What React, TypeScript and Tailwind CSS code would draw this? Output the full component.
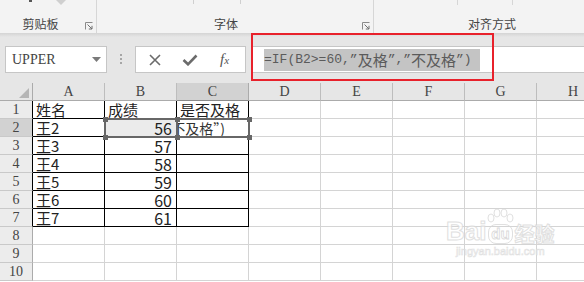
import React from 'react';

const serif = "font-['Liberation_Serif','Noto_Sans_CJK_SC',serif]";
const cjk = "font-['Noto_Sans_CJK_SC',sans-serif]";
const mono = "font-['Liberation_Mono','Noto_Sans_CJK_SC',monospace]";

const letters = ['A', 'B', 'C', 'D', 'E', 'F', 'G'];

// 表格内容 A1:C7
const data: string[][] = [
    ['姓名', '成绩', '是否及格'],
    ['王2', '56', ''],
    ['王3', '57', ''],
    ['王4', '58', ''],
    ['王5', '59', ''],
    ['王6', '60', ''],
    ['王7', '61', ''],
];

const Launcher = () => (
    <svg width="8" height="8" viewBox="0 0 8 8" className="shrink-0">
        <path d="M0.5 7.5V0.5H7.5" fill="none" stroke="#8a8a8a" />
        <path d="M2.5 2.5L7 7M7 3.8V7H3.8" fill="none" stroke="#6f6f6f" />
    </svg>
);

const Handle = ({ x, y }: { x: number; y: number }) => (
    <div className="absolute w-[5px] h-[5px] bg-[#676767]" style={{ left: x - 2, top: y - 2 }} />
);

const Cell: React.FC<{ row: number; col: number }> = ({ row, col }) => {
    const inTable = row <= 7 && col < 3;
    const border = inTable ? 'border-black' : 'border-[#d4d4d4]';
    const value = row <= 7 && col < 3 ? data[row - 1][col] : '';
    const isNumber = /^\d+$/.test(value);
    const selectedB = row === 2 && col === 1;
    const editingC = row === 2 && col === 2;
    return (
        <div
            className={`w-[72px] h-[18px] shrink-0 border-r border-b ${border} ${selectedB ? 'bg-[#ebebeb]' : 'bg-white'} flex items-center overflow-hidden whitespace-nowrap ${cjk} text-[#222] leading-none ${isNumber ? 'justify-end pr-[4px] text-[16px]' : 'pl-[3px] text-[15px]'}`}
        >
            {editingC ? (
                <div className="w-full flex justify-end pr-[23px] text-[14px] text-[#333]">不及格”)</div>
            ) : (
                value
            )}
        </div>
    );
};

const App: React.FC = () => {
    return (
        <div className="relative w-[584px] h-[282px] overflow-hidden bg-white">
            {/* 功能区 */}
            <div className="flex h-[33px] bg-[#f3f3f3]">
                <div className="w-[97px] shrink-0 border-r border-[#d6d6d6] flex flex-col">
                    <svg width="96" height="8" className="shrink-0">
                        <rect x="29" y="0" width="3" height="2" fill="#555" />
                        <path d="M56 0L61 5L66 0Z" fill="#cfcfcf" />
                    </svg>
                    <div className="flex items-end flex-1 pb-[1px]">
                        <div className={`w-[81px] text-center text-[12px] leading-[16px] text-[#444] ${cjk}`}>剪贴板</div>
                        <div className="ml-[4px] mb-[2px]">
                            <Launcher />
                        </div>
                    </div>
                </div>
                <div className="w-[277px] shrink-0 border-r border-[#d6d6d6] flex flex-col">
                    <svg width="276" height="8" className="shrink-0">
                        <rect x="96" y="0" width="1" height="4" fill="#cfcfcf" />
                        <rect x="143" y="0" width="1" height="4" fill="#cfcfcf" />
                    </svg>
                    <div className="flex items-end flex-1 pb-[1px]">
                        <div className={`w-[258px] text-center text-[12px] leading-[16px] text-[#444] ${cjk}`}>字体</div>
                        <div className="ml-[7px] mb-[2px]">
                            <Launcher />
                        </div>
                    </div>
                </div>
                <div className="flex-1 flex flex-col">
                    <svg width="210" height="8" className="shrink-0">
                        <rect x="83" y="0" width="1" height="5" fill="#d6d6d6" />
                        <rect x="138" y="0" width="1" height="5" fill="#d6d6d6" />
                    </svg>
                    <div className="flex items-end flex-1 pb-[1px]">
                        <div className={`ml-[94px] text-[12px] leading-[16px] text-[#444] ${cjk}`}>对齐方式</div>
                    </div>
                </div>
            </div>
            <div className="h-[4px] bg-gradient-to-b from-[#d4d4d4] to-[#e6e6e6]" />

            {/* 编辑栏 */}
            <div className="h-[46px] bg-[#e6e6e6] pt-[9px]">
                <div className="flex items-start h-[27px]">
                    <div className="ml-[5px] w-[102px] h-[27px] bg-white border border-[#c6c6c6] flex items-center pl-[6px] pr-[5px]">
                        <span className={`flex-1 text-[14px] text-[#444] ${serif}`}>UPPER</span>
                        <svg width="9" height="5" viewBox="0 0 9 5">
                            <path d="M0 0H9L4.5 5Z" fill="#7a7a7a" />
                        </svg>
                    </div>
                    <div className="ml-[13px] mt-[8px] flex flex-col gap-[2px]">
                        <div className="w-[2px] h-[2px] bg-[#a6a6a6]" />
                        <div className="w-[2px] h-[2px] bg-[#a6a6a6]" />
                        <div className="w-[2px] h-[2px] bg-[#a6a6a6]" />
                    </div>
                    <div className="ml-[13px] w-[111px] h-[27px] bg-white border border-[#c6c6c6] flex items-center">
                        <svg width="12" height="12" viewBox="0 0 12 12" className="ml-[13px]">
                            <path d="M1 1L11 11M11 1L1 11" stroke="#6b6b6b" strokeWidth="1.6" />
                        </svg>
                        <svg width="16" height="12" viewBox="0 0 16 12" className="ml-[21px]">
                            <path d="M1.5 6L6 10.3L14.5 1.5" fill="none" stroke="#6b6b6b" strokeWidth="2.6" />
                        </svg>
                        <span className={`ml-[22px] italic text-[15px] text-[#555] ${serif}`}>
                            f<span className="text-[11px]">x</span>
                        </span>
                    </div>
                    <div className="ml-[5px] flex-1 h-[27px] bg-white border-y border-l border-[#c6c6c6] flex items-center">
                        <div className="ml-[12px] w-[216px] h-[22px] bg-[#c4c4c4] flex items-center whitespace-nowrap text-[#5b5b5b]">
                            <span className={`${mono} text-[13px]`}>=IF(B2&gt;=60,”</span>
                            <span className={`${cjk} text-[15px] leading-none`}>及格</span>
                            <span className={`${mono} text-[13px]`}>”,”</span>
                            <span className={`${cjk} text-[15px] leading-none`}>不及格</span>
                            <span className={`${mono} text-[13px]`}>”)</span>
                        </div>
                    </div>
                </div>
            </div>

            {/* 列标题 */}
            <div className="flex h-[18px]">
                <div className="w-[33px] shrink-0 bg-[#e6e6e6] border-r border-b border-[#ababab] flex items-end justify-end pr-[3px] pb-[2px]">
                    <svg width="10" height="10" viewBox="0 0 10 10">
                        <path d="M10 0V10H0Z" fill="#b5b5b5" />
                    </svg>
                </div>
                {letters.map((l) => (
                    <div
                        key={l}
                        className={`w-[72px] shrink-0 border-r border-b flex items-center justify-center text-[14px] leading-none text-[#444] ${serif} ${l === 'C' ? 'bg-[#d2d2d2] border-r-[#ababab] border-b-[#8a8a8a]' : 'bg-[#e6e6e6] border-r-[#bdbdbd] border-b-[#ababab]'}`}
                    >
                        {l}
                    </div>
                ))}
                <div className={`flex-1 bg-[#e6e6e6] border-b border-[#ababab] flex items-center justify-center text-[14px] leading-none text-[#444] ${serif}`}>
                    <span className="ml-[25px]">H</span>
                </div>
            </div>

            {/* 行 */}
            {Array.from({ length: 10 }, (_, i) => i + 1).map((row) => (
                <div key={row} className="flex h-[18px]">
                    <div
                        className={`w-[33px] shrink-0 border-r border-b border-b-[#c9c9c9] flex items-center justify-center text-[14px] leading-none text-[#444] ${serif} ${row <= 7 ? 'border-r-black' : 'border-r-[#ababab]'} ${row === 2 ? 'bg-[#d2d2d2]' : 'bg-[#ececec]'}`}
                    >
                        {row}
                    </div>
                    {[0, 1, 2, 3, 4, 5, 6].map((col) => (
                        <Cell key={col} row={row} col={col} />
                    ))}
                    <div className="flex-1 border-b border-[#d4d4d4]" />
                </div>
            ))}

            {/* 选区 B2 / C2 */}
            <div className="absolute left-[104px] top-[118px] w-[74px] h-[20px] border-2 border-[#676767]" />
            <div className="absolute left-[176px] top-[118px] w-[74px] h-[20px] border-2 border-[#676767]" />
            <Handle x={105} y={119} />
            <Handle x={177} y={119} />
            <Handle x={249} y={119} />
            <Handle x={105} y={137} />
            <Handle x={177} y={137} />
            <Handle x={249} y={137} />

            {/* 红框标注 */}
            <div className="absolute left-[251px] top-[33px] w-[243px] h-[48px] border-2 border-[#e8212b]" />

            {/* 水印 */}
            <div className="absolute left-[446px] top-[204px] flex flex-col items-center opacity-80">
                <div className="flex items-end h-[40px]">
                    <span className="font-['Liberation_Sans',sans-serif] font-bold text-[26px] leading-none text-white [-webkit-text-stroke:1px_#d9d9d9]">Bai</span>
                    <div className="relative flex flex-col items-center">
                        <svg width="28" height="16" viewBox="0 0 28 16">
                            <ellipse cx="5" cy="10" rx="3" ry="4" fill="white" stroke="#dadada" />
                            <ellipse cx="11" cy="5" rx="3" ry="4" fill="white" stroke="#dadada" />
                            <ellipse cx="18" cy="5" rx="3" ry="4" fill="white" stroke="#dadada" />
                            <ellipse cx="24" cy="10" rx="3" ry="4" fill="white" stroke="#dadada" />
                        </svg>
                        <span className="px-[2px] rounded-[8px] border border-[#d9d9d9] font-['Liberation_Sans',sans-serif] font-bold text-[15px] leading-[18px] text-white [-webkit-text-stroke:0.8px_#d0d0d0]">du</span>
                    </div>
                    <span className={`${cjk} font-bold text-[20px] leading-none text-white [-webkit-text-stroke:1px_#d9d9d9]`}>经验</span>
                </div>
                <span className="mt-[2px] font-['Liberation_Sans',sans-serif] text-[11px] leading-none text-white [-webkit-text-stroke:0.6px_#d9d9d9]">jingyan.baidu.com</span>
            </div>
        </div>
    );
};

export default App;
